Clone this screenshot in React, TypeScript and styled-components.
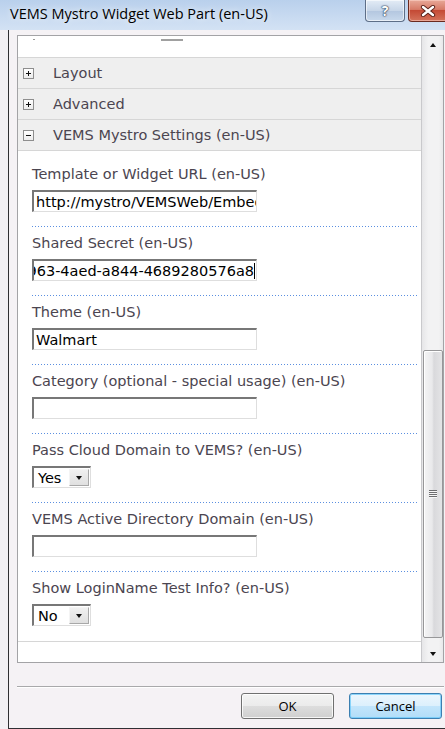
import styled, { createGlobalStyle } from "styled-components";

type Field =
  | { label: string; kind: "text"; value?: string; scrolled?: boolean }
  | { label: string; kind: "select"; value: string };

const fields: Field[] = [
  { label: "Template or Widget URL (en-US)", kind: "text", value: "http://mystro/VEMSWeb/Embed/Widget.aspx" },
  { label: "Shared Secret (en-US)", kind: "text", value: "f2c963-4aed-a844-4689280576a8", scrolled: true },
  { label: "Theme (en-US)", kind: "text", value: "Walmart" },
  { label: "Category (optional - special usage) (en-US)", kind: "text" },
  { label: "Pass Cloud Domain to VEMS? (en-US)", kind: "select", value: "Yes" },
  { label: "VEMS Active Directory Domain (en-US)", kind: "text" },
  { label: "Show LoginName Test Info? (en-US)", kind: "select", value: "No" },
];

const sections = [
  { title: "Layout", open: false },
  { title: "Advanced", open: false },
  { title: "VEMS Mystro Settings (en-US)", open: true },
];

const App = () => {
  return (
    <>
      <GlobalStyle />
      <Window>
        <TitleBar>
          <Title>VEMS Mystro Widget Web Part (en-US)</Title>
          <Controls>
            <HelpButton>?</HelpButton>
            <CloseButton>
              <svg width="16" height="12" viewBox="0 0 16 12">
                <path
                  d="M3 2 L13 10 M13 2 L3 10"
                  stroke="#5a2018"
                  strokeWidth="4.2"
                  strokeLinecap="round"
                />
                <path
                  d="M3 2 L13 10 M13 2 L3 10"
                  stroke="#ffffff"
                  strokeWidth="2.4"
                  strokeLinecap="round"
                />
              </svg>
            </CloseButton>
          </Controls>
        </TitleBar>

        <Frame>
          <Panel>
            <ScrollContent>
              <ClippedTop>
                <Tick />
                <ClippedBar />
              </ClippedTop>

              {sections.map((s) => (
                <SectionHeader key={s.title} $open={s.open}>
                  <ExpandBox $open={s.open} />
                  <HeaderText>{s.title}</HeaderText>
                </SectionHeader>
              ))}

              <SectionBody>
                {fields.map((f) => (
                  <FieldRow key={f.label}>
                    <Label>{f.label}</Label>
                    {f.kind === "text" ? (
                      <TextBox $scrolled={f.scrolled}>
                        <span>{f.value}</span>
                        {f.scrolled && <Caret />}
                      </TextBox>
                    ) : (
                      <Select>
                        <span>{f.value}</span>
                        <DropButton>
                          <ArrowDown />
                        </DropButton>
                      </Select>
                    )}
                  </FieldRow>
                ))}
              </SectionBody>
            </ScrollContent>

            <ScrollBar>
              <ScrollArrow>
                <ArrowUp />
              </ScrollArrow>
              <Track>
                <Thumb $offset={297} $size={288}>
                  <Grip />
                </Thumb>
              </Track>
              <ScrollArrow>
                <ArrowDown />
              </ScrollArrow>
            </ScrollBar>
          </Panel>

          <Divider />

          <ButtonRow>
            <DialogButton>OK</DialogButton>
            <DialogButton $focused>Cancel</DialogButton>
          </ButtonRow>
        </Frame>
      </Window>
    </>
  );
};

const GlobalStyle = createGlobalStyle`
  html, body {
    margin: 0;
    padding: 0;
  }
  body {
    background: #f2f0f4;
    overflow: hidden;
  }
`;

const labelFont = `"DejaVu Sans", Verdana, sans-serif`;
const uiFont = `"Open Sans", "Noto Sans", sans-serif`;

const Window = styled.div`
  width: 445px;
  height: 729px;
  display: flex;
  flex-direction: column;
  background: #f2f0f4;
  overflow: hidden;
`;

const TitleBar = styled.div`
  height: 30px;
  flex-shrink: 0;
  display: flex;
  align-items: flex-start;
  background: linear-gradient(to bottom, #b9d0ec, #c9dbf1 60%, #d3e2f4);
`;

const Title = styled.div`
  padding-left: 10px;
  line-height: 28px;
  font-family: ${uiFont};
  font-size: 14.5px;
  color: #000;
  text-shadow: 0 0 6px rgba(255, 255, 255, 0.9);
`;

const Controls = styled.div`
  margin-left: auto;
  margin-right: -3px;
  display: flex;
  gap: 3px;
`;

const HelpButton = styled.div`
  width: 38px;
  height: 21px;
  border: 1px solid #5d6e87;
  border-top: none;
  border-radius: 0 0 4px 4px;
  background: linear-gradient(to bottom, #e3ecf6, #c7d6e8 50%, #b3c6df 51%, #c8d9ec);
  box-shadow: inset 0 0 0 1px rgba(255, 255, 255, 0.6);
  display: flex;
  align-items: center;
  justify-content: center;
  font-family: ${uiFont};
  font-weight: 700;
  font-size: 14px;
  color: #fff;
  text-shadow: 0 0 1px #2c3d57, 0 0 1px #2c3d57, 0 0 2px #2c3d57;
`;

const CloseButton = styled.div`
  width: 38px;
  height: 21px;
  border: 1px solid #6a2a20;
  border-top: none;
  border-radius: 0 0 4px 4px;
  background: linear-gradient(to bottom, #e8a898, #d77b68 45%, #c44a35 50%, #d4735c);
  box-shadow: inset 0 0 0 1px rgba(255, 220, 210, 0.5);
  display: flex;
  align-items: center;
  justify-content: center;
`;

const Frame = styled.div`
  flex: 1;
  display: flex;
  flex-direction: column;
  margin-left: 8px;
  padding: 5px 1px 0 8px;
  border-left: 1px solid #2f2f33;
  border-bottom: 1px solid #2f2f33;
  background: #f5f2f5;
`;

const Panel = styled.div`
  height: 628px;
  box-sizing: border-box;
  display: flex;
  border: 1px solid #a3a3a6;
  background: #fff;
`;

const ScrollContent = styled.div`
  flex: 1;
  overflow: hidden;
  border-right: 1px solid #c9c9cc;
  background: #fff;
`;

const ClippedTop = styled.div`
  height: 21px;
  display: flex;
  align-items: flex-start;
  padding-top: 3px;
  box-sizing: border-box;
`;

const Tick = styled.div`
  width: 2px;
  height: 1px;
  margin-left: 15px;
  background: #9a9a9a;
`;

const ClippedBar = styled.div`
  width: 22px;
  height: 2px;
  margin-left: 126px;
  background: #a0a0a0;
`;

const SectionHeader = styled.div<{ $open: boolean }>`
  height: 30px;
  display: flex;
  align-items: center;
  padding-left: 5px;
  background: #efefef;
  border-top: 1px solid #d6d6d6;
  border-bottom: ${(p) => (p.$open ? "1px solid #d6d6d6" : "none")};
`;

const ExpandBox = styled.div<{ $open: boolean }>`
  position: relative;
  width: 11px;
  height: 11px;
  box-sizing: border-box;
  border: 1px solid #8e8e8e;
  background: linear-gradient(to bottom, #ffffff, #ececec);

  &::before {
    content: "";
    position: absolute;
    left: 2px;
    top: 4px;
    width: 5px;
    height: 1px;
    background: #111;
  }

  &::after {
    content: "";
    display: ${(p) => (p.$open ? "none" : "block")};
    position: absolute;
    left: 4px;
    top: 2px;
    width: 1px;
    height: 5px;
    background: #111;
  }
`;

const HeaderText = styled.span`
  margin-left: 19px;
  font-family: ${labelFont};
  font-size: 14.5px;
  color: #4b4550;
`;

const SectionBody = styled.div`
  padding-top: 7px;
  border-bottom: 1px solid #d6d6d6;
`;

/* blue dotted rule under each property */
const FieldRow = styled.div`
  margin: 0 3px 0 14px;
  padding: 8px 0 15px;
  background-image: repeating-linear-gradient(
    to right,
    #5b8fe0 0 1px,
    transparent 1px 3px
  );
  background-size: 100% 1px;
  background-position: left bottom;
  background-repeat: no-repeat;

  &:last-child {
    background-image: none;
  }
`;

const Label = styled.div`
  font-family: ${labelFont};
  font-size: 14.5px;
  line-height: 16px;
  color: #4b4550;
  white-space: nowrap;
  margin-bottom: 8px;
`;

const sunken = `
  box-sizing: border-box;
  height: 22px;
  border-style: solid;
  border-width: 2px 1px 1px 2px;
  border-color: #777 #dedede #dedede #777;
  background: #fff;
`;

const TextBox = styled.div<{ $scrolled?: boolean }>`
  ${sunken};
  width: 225px;
  display: flex;
  align-items: center;
  justify-content: ${(p) => (p.$scrolled ? "flex-end" : "flex-start")};
  padding: 0 ${(p) => (p.$scrolled ? "1px" : "2px")};
  overflow: hidden;
  white-space: nowrap;
  font-family: ${labelFont};
  font-size: 14.5px;
  color: #000;
`;

const Caret = styled.i`
  flex-shrink: 0;
  width: 1px;
  height: 16px;
  background: #000;
`;

const Select = styled.div`
  ${sunken};
  width: 59px;
  display: flex;
  align-items: center;
  padding-left: 4px;
  font-family: ${labelFont};
  font-size: 14.5px;
  color: #000;
`;

const DropButton = styled.div`
  margin-left: auto;
  margin-right: 1px;
  width: 20px;
  height: 17px;
  box-sizing: border-box;
  display: flex;
  align-items: center;
  justify-content: center;
  border: 1px solid;
  border-color: #f4f4f4 #a8a8a8 #a8a8a8 #f4f4f4;
  background: linear-gradient(to bottom, #f0f0f0, #e0e0e0);
`;

const ArrowDown = styled.div`
  width: 0;
  height: 0;
  border-left: 3.5px solid transparent;
  border-right: 3.5px solid transparent;
  border-top: 4px solid #111;
`;

const ArrowUp = styled.div`
  width: 0;
  height: 0;
  border-left: 3.5px solid transparent;
  border-right: 3.5px solid transparent;
  border-bottom: 4px solid #111;
`;

const ScrollBar = styled.div`
  width: 21px;
  display: flex;
  flex-direction: column;
  background: linear-gradient(to right, #e6e6e8, #f2f2f3 30%, #f2f2f3 80%, #e8e8ea);
`;

const ScrollArrow = styled.div`
  height: 17px;
  display: flex;
  align-items: center;
  justify-content: center;
`;

const Track = styled.div`
  flex: 1;
  display: flex;
  flex-direction: column;
`;

const Thumb = styled.div<{ $offset: number; $size: number }>`
  margin-top: ${(p) => p.$offset}px;
  height: ${(p) => p.$size}px;
  margin-left: 1px;
  box-sizing: border-box;
  display: flex;
  align-items: center;
  justify-content: center;
  border: 1px solid #979799;
  border-radius: 2px;
  background: linear-gradient(to right, #f4f4f5, #e9e9eb 45%, #d9d9dc 55%, #e4e4e6);
  box-shadow: inset 1px 1px 0 #fff;
`;

const Grip = styled.div`
  width: 8px;
  height: 8px;
  background: repeating-linear-gradient(
    to bottom,
    #6d6d70 0 1px,
    #f6f6f6 1px 2px
  );
`;

const Divider = styled.div`
  margin-top: 23px;
  height: 1px;
  background: #a9a9ab;
  box-shadow: 0 1px 0 #ffffff;
`;

const ButtonRow = styled.div`
  margin-top: 6px;
  padding-right: 2px;
  display: flex;
  justify-content: flex-end;
  gap: 15px;
`;

const DialogButton = styled.div<{ $focused?: boolean }>`
  width: 93px;
  height: 26px;
  box-sizing: border-box;
  display: flex;
  align-items: center;
  justify-content: center;
  border-radius: 3px;
  font-family: ${uiFont};
  font-size: 13px;
  color: #000;
  border: 1px solid ${(p) => (p.$focused ? "#3c7fb1" : "#707070")};
  background: ${(p) =>
    p.$focused
      ? "linear-gradient(to bottom, #ecf6fd, #dcf0fc 50%, #c2e5fb 51%, #b2ddf8)"
      : "linear-gradient(to bottom, #f3f3f3, #ebebeb 50%, #dddddd 51%, #cfcfcf)"};
  box-shadow: inset 0 0 0 1px
    ${(p) => (p.$focused ? "rgba(100, 200, 250, 0.7)" : "rgba(255, 255, 255, 0.8)")};
`;

export default App;
